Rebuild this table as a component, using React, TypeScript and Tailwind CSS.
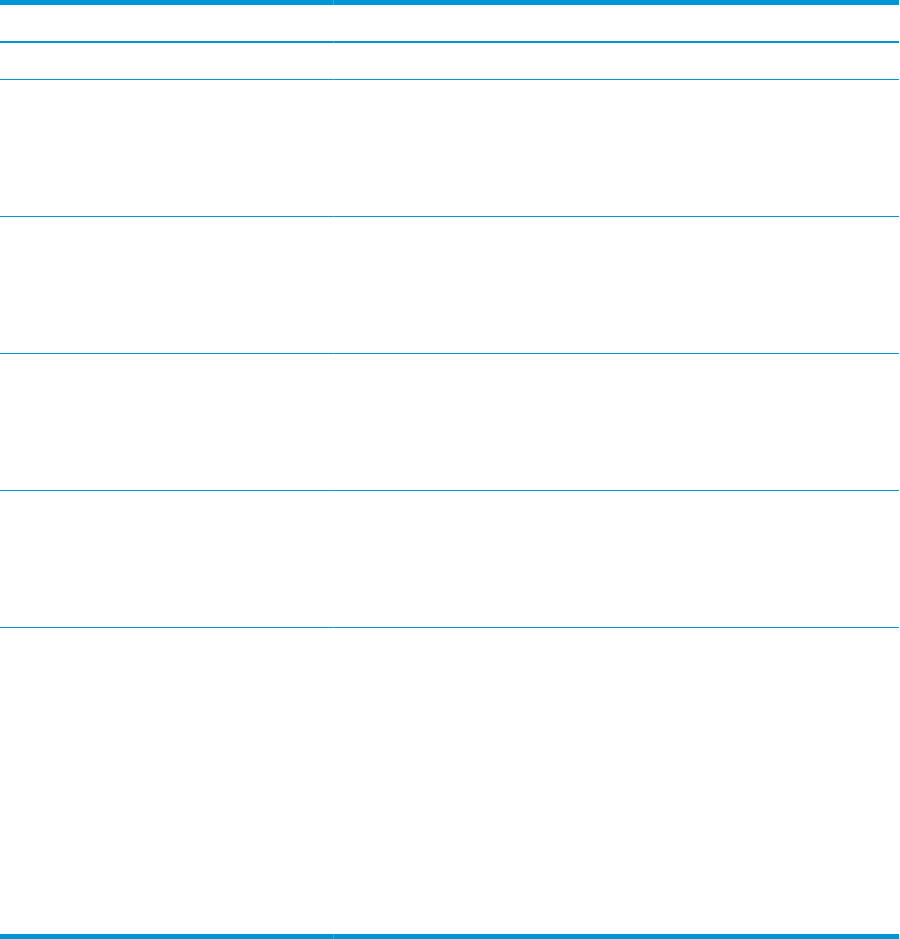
const rows = [
  { h: 'h-[36px]', line: 'h-[2px]' },
  { h: 'h-[36px]', line: 'h-px' },
  { h: 'h-[136px]', line: 'h-px' },
  { h: 'h-[136px]', line: 'h-px' },
  { h: 'h-[136px]', line: 'h-px' },
  { h: 'h-[136px]', line: 'h-px' },
]

function Rule({ className }: { className: string }) {
  // cell divider only shows up as a lighter pixel inside the rule
  return (
    <div className={`flex ${className}`}>
      <div className="w-[333px] bg-[#0096d6]" />
      <div className="w-px bg-[#3aa6dc]" />
      <div className="flex-1 bg-[#0096d6]" />
    </div>
  )
}

export default function App() {
  return (
    <div className="w-[899px] bg-white" style={{ fontFamily: '"Liberation Sans", Arial, sans-serif' }}>
      <Rule className="h-[5px]" />
      {rows.map((r, i) => (
        <div key={i}>
          <div className={`flex ${r.h}`}>
            <div className="w-[334px]" />
            <div className="flex-1" />
          </div>
          <Rule className={r.line} />
        </div>
      ))}
      <div className="h-[306px]" />
      <Rule className="h-[5px]" />
    </div>
  )
}
